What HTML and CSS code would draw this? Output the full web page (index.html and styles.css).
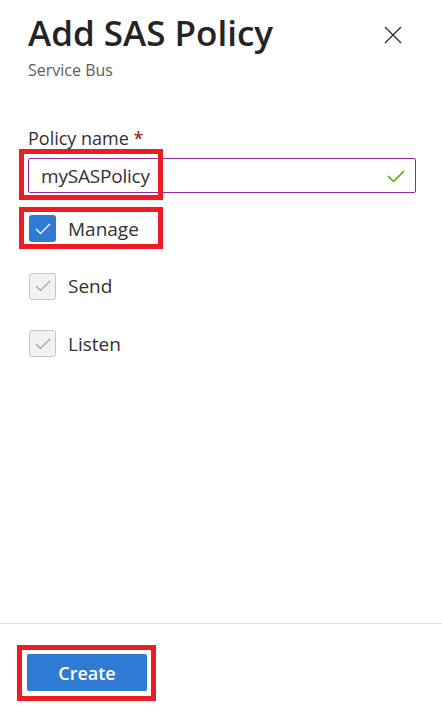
FILE: index.html
```html
<!DOCTYPE html>
<html lang="en">
<head>
<meta charset="utf-8">
<title>Add SAS Policy</title>
<link rel="stylesheet" href="styles.css">
</head>
<body>
<div class="panel">
  <header class="header">
    <div class="titles">
      <h1 class="title">Add SAS Policy</h1>
      <div class="subtitle">Service Bus</div>
    </div>
    <button class="close" aria-label="Close">
      <svg width="18" height="18" viewBox="0 0 18 18"><path d="M1 1 L17 17 M17 1 L1 17" stroke="#323130" stroke-width="1.4" fill="none"/></svg>
    </button>
  </header>

  <main class="content">
    <label class="field-label">Policy name <span class="req">*</span></label>
    <div class="input-wrap">
      <div class="input">
        <span class="input-text">mySASPolicy</span>
        <svg class="valid" width="18" height="14" viewBox="0 0 18 14"><path d="M1 7 L6.5 12.5 L17 2" stroke="#57a300" stroke-width="1.5" fill="none"/></svg>
      </div>
      <span class="mark mark-input"></span>
    </div>

    <div class="checks">
      <div class="check-row">
        <span class="box box-on">
          <svg width="16" height="12" viewBox="0 0 16 12"><path d="M1 6 L5.5 10.5 L15 1" stroke="#fff" stroke-width="1.4" fill="none"/></svg>
        </span>
        <span class="check-label">Manage</span>
        <span class="mark mark-manage"></span>
      </div>
      <div class="check-row">
        <span class="box box-off">
          <svg width="16" height="12" viewBox="0 0 16 12"><path d="M1 6 L5.5 10.5 L15 1" stroke="#a19f9d" stroke-width="1.2" fill="none"/></svg>
        </span>
        <span class="check-label">Send</span>
      </div>
      <div class="check-row">
        <span class="box box-off">
          <svg width="16" height="12" viewBox="0 0 16 12"><path d="M1 6 L5.5 10.5 L15 1" stroke="#a19f9d" stroke-width="1.2" fill="none"/></svg>
        </span>
        <span class="check-label">Listen</span>
      </div>
    </div>
  </main>

  <footer class="footer">
    <div class="btn-wrap">
      <button class="btn-primary">Create</button>
      <span class="mark mark-btn"></span>
    </div>
  </footer>
</div>
</body>
</html>
```

FILE: styles.css
```css
* { box-sizing: border-box; }
html, body { margin: 0; padding: 0; background: #fff; }
body {
  font-family: "Open Sans", "Noto Sans", "Liberation Sans", sans-serif;
  color: #323130;
}
.panel {
  width: 442px;
  height: 717px;
  display: flex;
  flex-direction: column;
}
.header {
  display: flex;
  justify-content: space-between;
  align-items: flex-start;
  padding: 10px 40px 0 28px;
}
.title {
  margin: 0;
  font-size: 35px;
  font-weight: 600;
  line-height: 46px;
  color: #252423;
}
.subtitle {
  font-size: 16px;
  line-height: 22px;
  color: #605e5c;
  margin-top: 3px;
}
.close {
  border: 0;
  background: none;
  padding: 0;
  margin-top: 16px;
  width: 18px;
  height: 18px;
  display: flex;
}
.content {
  flex: 1;
  padding: 45px 26px 0 28px;
}
.field-label {
  display: block;
  font-size: 18px;
  line-height: 24px;
  color: #323130;
}
.req { color: #a4262c; font-weight: 600; }
.input-wrap {
  position: relative;
  margin-top: 8px;
}
.input {
  height: 35px;
  border: 1px solid #8a2da5;
  border-radius: 2px;
  display: flex;
  align-items: center;
  justify-content: space-between;
  padding: 0 10px 0 12px;
}
.input-text { font-size: 19px; color: #323130; letter-spacing: -0.2px; }
.mark {
  position: absolute;
  border: 5px solid #ed1c24;
  pointer-events: none;
}
.mark-input { left: -9px; top: -9px; width: 144px; height: 51px; }
.checks {
  display: flex;
  flex-direction: column;
  gap: 30.5px;
  margin-top: 22px;
  padding-left: 1px;
}
.check-row {
  position: relative;
  display: flex;
  align-items: center;
  gap: 12px;
  height: 27px;
}
.box {
  width: 27px;
  height: 27px;
  border-radius: 3px;
  display: flex;
  align-items: center;
  justify-content: center;
  flex: none;
}
.box-on { background: #2f7ad3; }
.box-off { background: #f3f2f1; border: 1px solid #c8c6c4; }
.check-label { font-size: 19px; color: #323130; }
.mark-manage { left: -10px; top: -8px; width: 144px; height: 42px; }
.footer {
  border-top: 1px solid #e1dfdd;
  padding: 30px 0 26px 27px;
}
.btn-wrap { position: relative; display: inline-block; }
.btn-primary {
  display: block;
  width: 120px;
  height: 37px;
  border: 0;
  border-radius: 2px;
  background: #2f7ad3;
  color: #fff;
  font-family: inherit;
  font-size: 18px;
  font-weight: 600;
}
.mark-btn { left: -10px; top: -9px; width: 139px; height: 56px; }
```
